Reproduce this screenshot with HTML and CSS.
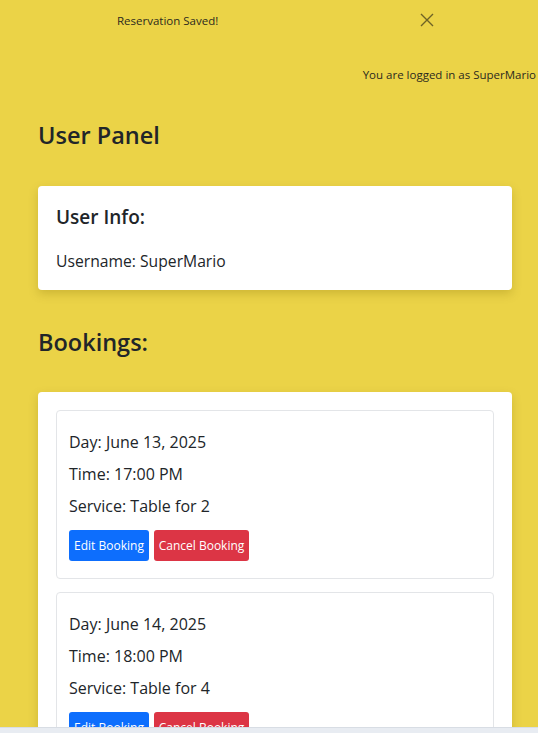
FILE: index.html
```html
<!DOCTYPE html>
<html lang="en">
<head>
<meta charset="utf-8">
<title>User Panel</title>
<link rel="stylesheet" href="styles.css">
</head>
<body>
<div class="toast">
  <span class="toast-msg">Reservation Saved!</span>
  <button class="toast-close" aria-label="Close">
    <svg width="14" height="14" viewBox="0 0 14 14"><path d="M1 1 L13 13 M13 1 L1 13" stroke="#6e6326" stroke-width="1.4" fill="none"/></svg>
  </button>
</div>
<div class="navbar"><span>You are logged in as SuperMario</span></div>
<main class="container">
  <h1 class="page-title">User Panel</h1>
  <section class="card info-card">
    <h2 class="card-title">User Info:</h2>
    <p class="info-line">Username: SuperMario</p>
  </section>
  <h1 class="section-title">Bookings:</h1>
  <section class="card bookings-card">
    <div class="booking">
      <p class="b-line">Day: June 13, 2025</p>
      <p class="b-line">Time: 17:00 PM</p>
      <p class="b-line">Service: Table for 2</p>
      <div class="actions">
        <button class="btn btn-edit">Edit Booking</button>
        <button class="btn btn-cancel">Cancel Booking</button>
      </div>
    </div>
    <div class="booking">
      <p class="b-line">Day: June 14, 2025</p>
      <p class="b-line">Time: 18:00 PM</p>
      <p class="b-line">Service: Table for 4</p>
      <div class="actions">
        <button class="btn btn-edit">Edit Booking</button>
        <button class="btn btn-cancel">Cancel Booking</button>
      </div>
    </div>
  </section>
</main>
<div class="bottom-bar"></div>
</body>
</html>
```

FILE: styles.css
```css
* { box-sizing: border-box; }
html, body { margin: 0; padding: 0; }
body {
  background: #ebd347;
  font-family: "Open Sans", "Noto Sans", sans-serif;
  color: #212529;
  height: 733px;
  overflow: hidden;
}
.toast {
  display: flex;
  align-items: center;
  height: 40px;
  padding-left: 117px;
}
.toast-msg {
  width: 303px;
  font-size: 11.5px;
  color: #2b2a1e;
}
.toast-close {
  border: 0;
  background: none;
  padding: 0;
  width: 14px;
  height: 14px;
  display: flex;
}
.navbar {
  display: flex;
  justify-content: flex-end;
  align-items: center;
  height: 28px;
  margin-top: 20px;
  padding-right: 2px;
  font-size: 11.5px;
  color: #2b2a1e;
}
.container {
  padding: 0 26px 0 38px;
}
.page-title, .section-title {
  margin: 0;
  font-size: 23.5px;
  font-weight: 600;
  line-height: 32px;
}
.page-title { margin-top: 31px; }
.section-title { margin-top: 36px; }
.card {
  background: #fff;
  border-radius: 4px;
  box-shadow: 0 4px 10px rgba(120, 100, 0, 0.25);
}
.info-card {
  margin-top: 35px;
  height: 104px;
  padding: 17px 18px;
}
.card-title {
  margin: 0;
  font-size: 19px;
  font-weight: 600;
  line-height: 28px;
}
.info-line {
  margin: 18px 0 0;
  font-size: 15.7px;
  line-height: 24px;
}
.bookings-card {
  margin-top: 34px;
  padding: 18px 18px 20px;
  display: flex;
  flex-direction: column;
  gap: 13px;
}
.booking {
  border: 1px solid #e3e5e8;
  border-radius: 4px;
  height: 169px;
  padding: 19px 12px 0;
}
.b-line {
  margin: 0 0 8px;
  font-size: 16px;
  line-height: 24px;
}
.actions {
  display: flex;
  gap: 5px;
  margin-top: 12px;
}
.btn {
  border: 0;
  border-radius: 3px;
  height: 31px;
  padding: 0;
  font-family: inherit;
  font-size: 12px;
  color: #fff;
  white-space: nowrap;
}
.btn-edit { background: #0d6efd; width: 80px; }
.btn-cancel { background: #dc3545; width: 95px; }
.bottom-bar {
  position: fixed;
  left: 0;
  right: 0;
  bottom: 0;
  height: 6px;
  background: #e8ecf2;
  border-top: 1px solid #d8dde4;
}
```
